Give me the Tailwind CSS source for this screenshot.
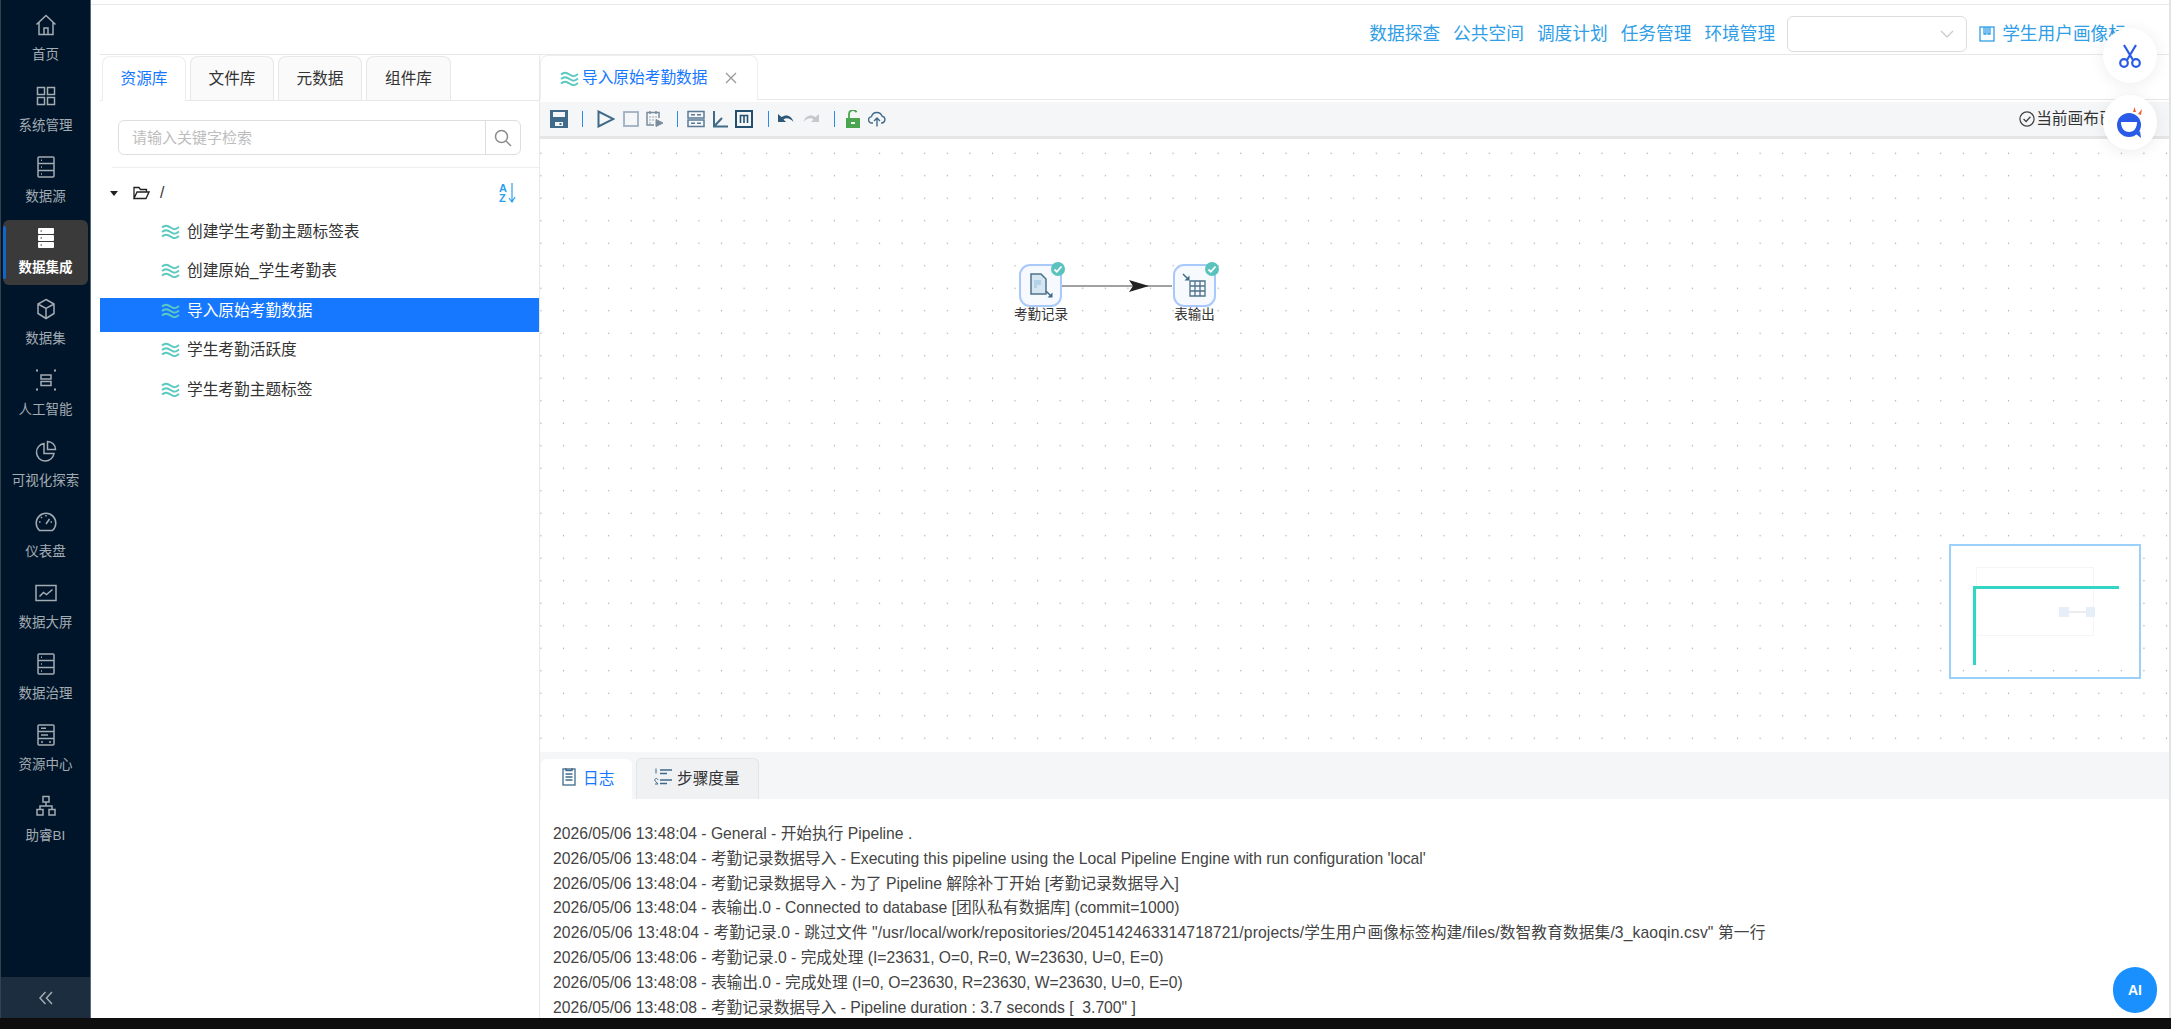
<!DOCTYPE html>
<html lang="zh-CN">

<head>
    <meta charset="UTF-8">
    <title>数据集成</title>
    <script src="https://cdn.jsdelivr.net/npm/@tailwindcss/browser@4"></script>
</head>

<body class="h-screen w-screen overflow-hidden bg-white font-['Liberation_Sans','Noto_Sans_CJK_SC',sans-serif]">
    <svg class="hidden">
        <symbol id="wave" viewBox="0 0 19 15">
            <path d="M1 3.500c3-2.500 5-2.500 8.500 0s5 2 8.500-.5M1 8c3-2.500 5-2.500 8.500 0s5 2 8.500-.5M1 12.500c3-2.500 5-2.500 8.500 0s5 2 8.500-.5" fill="none" stroke="#5cc9c0" stroke-width="2" />
        </symbol>
        <symbol id="rows" viewBox="0 0 22 22" fill="none" stroke="currentColor" stroke-width="1.500">
            <rect x="3" y="1" width="16" height="20" rx="1" />
            <path d="M3 7.500h16M3 14.500h16M6 4.200h1M6 11h1M6 18h1" />
        </symbol>
    </svg>

    <div class="relative flex h-[1018px] border-r-2 border-[#e3e3e3]">
        <!-- sidebar -->
        <aside class="flex h-full w-[91px] shrink-0 flex-col border-x border-x-[#5b6875] border-l-[#33424f] bg-[#001529] text-[#a3abb3]">
            <nav class="flex-1 pt-1">
                <a class="flex h-[71px] flex-col items-center px-[2px] py-[3px]">
                    <svg class="mt-[7px] h-[22px] w-[22px]" viewBox="0 0 22 22" fill="none" stroke="currentColor" stroke-width="1.500">
                        <path d="M1.500 10.500 11 1.500l9.500 9M4 8.500V20.500h14V8.500M9 20.500v-6.500h4v6.500" />
                    </svg>
                    <span class="mt-[9px] text-[13.500px] leading-5">首页</span>
                </a>
                <a class="flex h-[71px] flex-col items-center px-[2px] py-[3px]">
                    <svg class="mt-[7px] h-[22px] w-[22px]" viewBox="0 0 22 22" fill="none" stroke="currentColor" stroke-width="1.500">
                        <rect x="2.500" y="2.500" width="7" height="7" />
                        <rect x="12.500" y="2.500" width="7" height="7" />
                        <rect x="2.500" y="12.500" width="7" height="7" />
                        <rect x="12.500" y="12.500" width="7" height="7" />
                    </svg>
                    <span class="mt-[9px] text-[13.500px] leading-5">系统管理</span>
                </a>
                <a class="flex h-[71px] flex-col items-center px-[2px] py-[3px]">
                    <svg class="mt-[7px] h-[22px] w-[22px]">
                        <use href="#rows" />
                    </svg>
                    <span class="mt-[9px] text-[13.500px] leading-5">数据源</span>
                </a>
                <a class="relative flex h-[71px] flex-col items-center px-[2px] py-[3px] text-white">
                    <span class="flex h-full w-full flex-col items-center rounded-md bg-[#3a3a3a]">
                        <svg class="mt-[7px] h-[22px] w-[22px]" viewBox="0 0 22 22">
                            <rect x="3" y="1" width="16" height="6" rx="1" fill="#fff" />
                            <rect x="3" y="8" width="16" height="6" rx="1" fill="#fff" />
                            <rect x="3" y="15" width="16" height="6" rx="1" fill="#fff" />
                            <path d="M5.500 4h1.500M5.500 11h1.500M5.500 18h1.500" stroke="#333" stroke-width="1.200" />
                        </svg>
                        <span class="mt-[9px] text-[13.500px] font-bold leading-5">数据集成</span>
                    </span>
                    <span class="absolute left-[2px] top-[9px] h-[53px] w-[3px] rounded bg-[#1266c4]"></span>
                </a>
                <a class="flex h-[71px] flex-col items-center px-[2px] py-[3px]">
                    <svg class="mt-[7px] h-[22px] w-[22px]" viewBox="0 0 22 22" fill="none" stroke="currentColor" stroke-width="1.500">
                        <path d="M11 1.500l8 4.500v9.500l-8 5-8-5V6zM3 6l8 4.500L19 6M11 10.500v10" />
                    </svg>
                    <span class="mt-[9px] text-[13.500px] leading-5">数据集</span>
                </a>
                <a class="flex h-[71px] flex-col items-center px-[2px] py-[3px]">
                    <svg class="mt-[7px] h-[22px] w-[22px]" viewBox="0 0 22 22" fill="none" stroke="currentColor" stroke-width="1.500">
                        <rect x="6" y="6" width="10" height="4" />
                        <rect x="6" y="12.500" width="10" height="4" />
                        <path d="M1 1.500h2M19 1.500h2M1 20.500h2M19 20.500h2" stroke-width="2.200" />
                    </svg>
                    <span class="mt-[9px] text-[13.500px] leading-5">人工智能</span>
                </a>
                <a class="flex h-[71px] flex-col items-center px-[2px] py-[3px]">
                    <svg class="mt-[7px] h-[22px] w-[22px]" viewBox="0 0 22 22" fill="none" stroke="currentColor" stroke-width="1.500">
                        <path d="M9 3.500a8.800 8.800 0 1 0 10 10h-10zM12.500 1.500v8h8a8 8 0 0 0-8-8z" />
                    </svg>
                    <span class="mt-[9px] text-[13.500px] leading-5">可视化探索</span>
                </a>
                <a class="flex h-[71px] flex-col items-center px-[2px] py-[3px]">
                    <svg class="mt-[7px] h-[22px] w-[22px]" viewBox="0 0 22 22" fill="none" stroke="currentColor" stroke-width="1.500">
                        <path d="M4.500 19.500a9.800 9.800 0 1 1 13 0zM11 13l3.500-5M4 11h1.500M17 11h-1.500M11 4v1.500M6 6l1 1" />
                    </svg>
                    <span class="mt-[9px] text-[13.500px] leading-5">仪表盘</span>
                </a>
                <a class="flex h-[71px] flex-col items-center px-[2px] py-[3px]">
                    <svg class="mt-[7px] h-[22px] w-[22px]" viewBox="0 0 22 22" fill="none" stroke="currentColor" stroke-width="1.500">
                        <rect x="1" y="3.500" width="20" height="15" />
                        <path d="M4.500 14.500l4-4 3 2 6-5" />
                    </svg>
                    <span class="mt-[9px] text-[13.500px] leading-5">数据大屏</span>
                </a>
                <a class="flex h-[71px] flex-col items-center px-[2px] py-[3px]">
                    <svg class="mt-[7px] h-[22px] w-[22px]">
                        <use href="#rows" />
                    </svg>
                    <span class="mt-[9px] text-[13.500px] leading-5">数据治理</span>
                </a>
                <a class="flex h-[71px] flex-col items-center px-[2px] py-[3px]">
                    <svg class="mt-[7px] h-[22px] w-[22px]" viewBox="0 0 22 22" fill="none" stroke="currentColor" stroke-width="1.500">
                        <rect x="3" y="1" width="16" height="20" rx="1" />
                        <path d="M3 7.500h16M3 14.500h16M6 4.200h5M6 11h7M6 18h2M14 18h2" />
                    </svg>
                    <span class="mt-[9px] text-[13.500px] leading-5">资源中心</span>
                </a>
                <a class="flex h-[71px] flex-col items-center px-[2px] py-[3px]">
                    <svg class="mt-[7px] h-[22px] w-[22px]" viewBox="0 0 22 22" fill="none" stroke="currentColor" stroke-width="1.500">
                        <rect x="8" y="1.500" width="6" height="5.500" />
                        <rect x="2" y="14.500" width="6" height="5.500" />
                        <rect x="14" y="14.500" width="6" height="5.500" />
                        <path d="M11 7v4M5 14.500V11h12v3.500" />
                    </svg>
                    <span class="mt-[9px] text-[13.500px] leading-5">助睿BI</span>
                </a>
            </nav>
            <button class="flex h-[41px] w-full items-center justify-center bg-[#1b2d3e]">
                <svg class="h-4 w-4" viewBox="0 0 16 16" fill="none" stroke="#a3abb3" stroke-width="1.500">
                    <path d="M7.500 2 2 8l5.500 6M14 2 8.500 8l5.500 6" />
                </svg>
            </button>
        </aside>

        <!-- content -->
        <div class="flex min-w-0 flex-1 flex-col">
            <div class="h-[5px] shrink-0 border-b border-[#e8e8e8]"></div>
            <div class="ml-[9px] flex h-[50px] shrink-0 items-center justify-end border-b border-[#e8e8e8] pr-[43px] pt-[9px]">
                <div class="flex items-center gap-[13px] text-[17.700px] leading-6 text-[#2f9ee6]">
                    <a>数据探查</a>
                    <a>公共空间</a>
                    <a>调度计划</a>
                    <a>任务管理</a>
                    <a>环境管理</a>
                </div>
                <div class="ml-[12px] flex h-[36px] w-[180px] items-center justify-end rounded-md border border-[#dcdcdc] pr-[12px]">
                    <svg class="h-3 w-3.5" viewBox="0 0 14 12" fill="none" stroke="#c8c8c8" stroke-width="1.200">
                        <path d="M1 3l6 6 6-6" />
                    </svg>
                </div>
                <a class="ml-[12px] flex items-center whitespace-nowrap text-[17.700px] leading-6 text-[#2f9ee6]">
                    <svg class="mr-[7px] h-4 w-4 shrink-0" viewBox="0 0 16 16" fill="none" stroke="currentColor" stroke-width="1.300">
                        <rect x="1" y="1" width="14" height="14" />
                        <path d="M5 1v7h2V1M9 1v7h2V1" />
                    </svg>
                    学生用户画像标
                </a>
            </div>

            <div class="flex min-h-0 flex-1">
                <!-- repository panel -->
                <section class="ml-[9px] w-[440px] shrink-0 border-r border-[#e8e8e8]">
                    <div class="flex h-[46px] items-end gap-1 border-b border-[#e8e8e8] pl-[2px] text-[15.700px] text-[#333]">
                        <button class="-mb-px flex h-[45px] w-[84px] items-center justify-center rounded-t-lg border border-b-0 border-[#eee] bg-white text-[#1677ff]">资源库</button>
                        <button class="flex h-[44px] w-[84px] items-center justify-center rounded-t-lg border border-b-0 border-[#e8e8e8] bg-[#fafafa]">文件库</button>
                        <button class="flex h-[44px] w-[84px] items-center justify-center rounded-t-lg border border-b-0 border-[#e8e8e8] bg-[#fafafa]">元数据</button>
                        <button class="flex h-[44px] w-[85px] items-center justify-center rounded-t-lg border border-b-0 border-[#e8e8e8] bg-[#fafafa]">组件库</button>
                    </div>
                    <div class="ml-[18px] mt-[19px] flex h-[35px] w-[403px] items-center rounded-md border border-[#dedede]">
                        <input class="h-full min-w-0 flex-1 bg-transparent pl-[13px] text-[15px] outline-none placeholder:text-[#bdbdbd]" placeholder="请输入关键字检索">
                        <span class="flex h-full w-[35px] shrink-0 items-center justify-center border-l border-[#dedede]">
                            <svg class="h-[18px] w-[18px]" viewBox="0 0 18 18" fill="none" stroke="#8a8a8a" stroke-width="1.500">
                                <circle cx="7.500" cy="7.500" r="6" />
                                <path d="M12 12l5 5" />
                            </svg>
                        </span>
                    </div>
                    <div class="ml-[12px] mt-[12px] h-px bg-[#eeeeee]"></div>

                    <div class="flex h-[48px] items-center pl-[10px] pt-[2px] text-[#333]">
                        <span class="h-0 w-0 border-x-[4px] border-t-[5px] border-x-transparent border-t-[#222]"></span>
                        <svg class="ml-[15px] h-[14px] w-[17px]" viewBox="0 0 17 14" fill="none" stroke="#222" stroke-width="1.300">
                            <path d="M1 12.500V1.500h5l1.500 2h6v2.500M1 12.500h12l3-6.500H4z" />
                        </svg>
                        <span class="ml-[10px] text-[15.700px]">/</span>
                        <span class="relative ml-auto mr-[22px] flex w-[18px] flex-col text-[11px] font-bold leading-[10px] text-[#2b9fee]">
                            <span>A</span><span>Z</span>
                            <svg class="absolute left-[9px] top-0 h-[20px] w-[8px]" viewBox="0 0 8 20" fill="none" stroke="currentColor" stroke-width="1.200">
                                <path d="M4 0v18M1 15l3 4 3-5" />
                            </svg>
                        </span>
                    </div>

                    <ul class="mt-[3px] flex flex-col gap-[5.400px] text-[15.700px] leading-[26px] text-[#333]">
                        <li class="flex h-[34px] pl-[61px]"><svg class="mr-[7px] mt-[5px] h-[15px] w-[19px]"><use href="#wave" /></svg>创建学生考勤主题标签表</li>
                        <li class="flex h-[34px] pl-[61px]"><svg class="mr-[7px] mt-[5px] h-[15px] w-[19px]"><use href="#wave" /></svg>创建原始_学生考勤表</li>
                        <li class="flex h-[34px] bg-[#1677ff] pl-[61px] text-white"><svg class="mr-[7px] mt-[5px] h-[15px] w-[19px]"><use href="#wave" /></svg>导入原始考勤数据</li>
                        <li class="flex h-[34px] pl-[61px]"><svg class="mr-[7px] mt-[5px] h-[15px] w-[19px]"><use href="#wave" /></svg>学生考勤活跃度</li>
                        <li class="flex h-[34px] pl-[61px]"><svg class="mr-[7px] mt-[5px] h-[15px] w-[19px]"><use href="#wave" /></svg>学生考勤主题标签</li>
                    </ul>
                </section>

                <!-- editor -->
                <section class="flex min-w-0 flex-1 flex-col">
                    <div class="flex h-[45px] shrink-0 border-b border-[#e8e8e8]">
                        <div class="-mb-px flex h-[45px] w-[218px] items-center rounded-t-lg border border-b-0 border-[#eee] bg-white pl-[19px] text-[15.700px] text-[#1677ff]">
                            <svg class="mr-[3px] h-[15px] w-[19px]"><use href="#wave" /></svg>
                            导入原始考勤数据
                            <svg class="ml-[17px] h-[12px] w-[12px]" viewBox="0 0 12 12" stroke="#999" stroke-width="1.300">
                                <path d="M1 1l10 10M11 1 1 11" />
                            </svg>
                        </div>
                    </div>

                    <div class="mt-[2px] flex h-[37px] shrink-0 items-center border-b-[3px] border-[#e6e6e6] bg-[#f5f6f8] pl-[10px] pr-[23px]">
                        <svg class="h-[18px] w-[18px]" viewBox="0 0 18 18">
                            <path d="M0 0h18v18H0zM3 2v5h12V2zM5 12v4h8v-4z" fill="#3f6a8a" fill-rule="evenodd" />
                            <path d="M9.500 13h2v2h-2z" fill="#3f6a8a" />
                        </svg>
                        <span class="mx-[14px] h-[16px] w-px bg-[#2a8ce8]"></span>
                        <svg class="h-[18px] w-[18px]" viewBox="0 0 18 18" fill="none" stroke="#3f6a8a" stroke-width="2">
                            <path d="M1.500 1.500v15l15-7.500z" />
                        </svg>
                        <svg class="ml-[8px] h-4 w-4" viewBox="0 0 16 16" fill="none" stroke="#9fb0bf" stroke-width="1.800">
                            <rect x="1" y="1" width="14" height="14" />
                        </svg>
                        <svg class="ml-[7px] h-[18px] w-[18px]" viewBox="0 0 18 18" fill="none" stroke="#7a8c9c" stroke-width="1.500">
                            <path d="M8 15H1V2.500h12V8M4 1v3M10 1v3" />
                            <path d="M3.500 7h1M6.500 7h1M9.500 7h1M3.500 10h1M6.500 10h1M3.500 13h1" stroke-width="1.300" />
                            <path d="M10 9.500v7l7-3.500z" fill="#7a8c9c" stroke-width="1" />
                        </svg>
                        <span class="ml-[13px] mr-[9px] h-[16px] w-px bg-[#2a8ce8]"></span>
                        <svg class="h-[18px] w-[18px]" viewBox="0 0 18 18" fill="none" stroke="#5a7a95" stroke-width="1.500">
                            <rect x="1" y="1.500" width="16" height="6.500" />
                            <rect x="1" y="10" width="16" height="6.500" />
                            <path d="M4 4.700h4M10 4.700h4M4 13.300h4M10 13.300h4" />
                        </svg>
                        <svg class="ml-[7px] h-[18px] w-[17px]" viewBox="0 0 17 18" fill="none" stroke="#3f6a8a" stroke-width="2">
                            <path d="M2 1v15.500h14M2 16.500 10 8" />
                        </svg>
                        <svg class="ml-[6px] h-[18px] w-[18px]" viewBox="0 0 18 18" fill="none" stroke="#24506f" stroke-width="2">
                            <rect x="1" y="1" width="16" height="16" />
                            <path d="M5.500 13V5.500h7V13M9 5.500V13" stroke-width="1.600" />
                        </svg>
                        <span class="mx-[15px] h-[16px] w-px bg-[#2a8ce8]"></span>
                        <svg class="-ml-[6px] h-[16px] w-[16px]" viewBox="0 0 16 16">
                            <path d="M0 3v8h8L5.500 8.500C8 6.500 12 7 15.500 11c-1.500-6-7-8.500-12-5z" fill="#2f5876" />
                        </svg>
                        <svg class="ml-[9px] h-[16px] w-[16px] -scale-x-100" viewBox="0 0 16 16">
                            <path d="M0 3v8h8L5.500 8.500C8 6.500 12 7 15.500 11c-1.500-6-7-8.500-12-5z" fill="#c4c9cd" />
                        </svg>
                        <span class="mx-[15px] h-[16px] w-px bg-[#2a8ce8]"></span>
                        <svg class="-ml-[4px] h-[18px] w-[14px]" viewBox="0 0 14 18">
                            <path d="M3 8V4a4 4 0 0 1 7.500-1.800" fill="none" stroke="#4aa64e" stroke-width="1.800" />
                            <path d="M0 8h14v10H0zM5 12v2h4v-2z" fill="#4aa64e" fill-rule="evenodd" />
                        </svg>
                        <svg class="ml-[8px] h-[16px] w-[18px]" viewBox="0 0 18 16" fill="none" stroke="#3f6a8a" stroke-width="1.400">
                            <path d="M5 12H4a3.200 3.200 0 0 1-.5-6.400 5.500 5.500 0 0 1 10.500-.5 3.500 3.500 0 0 1 0 6.900h-1M9 15.500V7.500M6 10l3-3 3 3" />
                        </svg>
                        <span class="ml-auto flex items-center gap-px text-[15.700px] text-[#333]">
                            <svg class="h-4 w-4" viewBox="0 0 14 14" fill="none" stroke="#444" stroke-width="1.100">
                                <circle cx="7" cy="7" r="6.200" />
                                <path d="M4 7l2.200 2.200L10 5" />
                            </svg>
                            当前画布已保存
                        </span>
                    </div>

                    <!-- canvas -->
                    <div class="relative min-h-0 flex-1 overflow-hidden bg-white bg-[radial-gradient(circle,#a0a0a0_0.8px,transparent_1px)] bg-[length:22.590px_22.500px] bg-[position:-10.400px_3px]">
                        <svg class="absolute left-[521px] top-[141px] h-[12px] w-[114px]" viewBox="0 0 114 12">
                            <path d="M0 6h111" stroke="#444" stroke-width="1.200" />
                            <path d="M68 0l20 6-20 6 4-6z" fill="#222" />
                        </svg>
                        <div class="absolute left-[479px] top-[125px] flex h-[43px] w-[43px] items-center justify-center rounded-[11px] border-2 border-[#a9c9fb] bg-[#f6faff]">
                            <svg class="h-[26px] w-[26px]" viewBox="0 0 26 26">
                                <path d="M3 1h10l5 5v15H3z" fill="#d5e6f2" stroke="#4f7089" stroke-width="1.500" />
                                <path d="M6 7h7v5H9v3H6z" fill="#b3d2e8" />
                                <path d="M18 18l5 5" stroke="#3f6a8a" stroke-width="1.500" />
                                <path d="M24.500 24.500h-5l5-5z" fill="#3f6a8a" />
                            </svg>
                        </div>
                        <span class="absolute left-[511px] top-[123px] flex h-[14px] w-[14px] items-center justify-center rounded-full bg-[#5bc3bd]">
                            <svg class="h-[10px] w-[10px]" viewBox="0 0 10 10" fill="none" stroke="#fff" stroke-width="1.800"><path d="M1.500 5.500l2.300 2.300L8.500 2.500" /></svg>
                        </span>
                        <span class="absolute left-[473px] top-[167px] w-[56px] whitespace-nowrap text-center text-[13.500px] leading-[18px] text-[#333]">考勤记录</span>

                        <div class="absolute left-[633px] top-[125px] flex h-[43px] w-[43px] items-center justify-center rounded-[11px] border-2 border-[#a9c9fb] bg-[#f6faff]">
                            <svg class="h-[26px] w-[26px]" viewBox="0 0 26 26" fill="none" stroke="#4f7089" stroke-width="1.300">
                                <path d="M8 8h15v15H8zM8 13h15M8 18h15M13 8v15M18 8v15" />
                                <path d="M1 1l5 5" stroke="#3f6a8a" stroke-width="1.500" />
                                <path d="M7.500 7.500h-5l5-5z" fill="#3f6a8a" stroke="none" />
                            </svg>
                        </div>
                        <span class="absolute left-[665px] top-[123px] flex h-[14px] w-[14px] items-center justify-center rounded-full bg-[#5bc3bd]">
                            <svg class="h-[10px] w-[10px]" viewBox="0 0 10 10" fill="none" stroke="#fff" stroke-width="1.800"><path d="M1.500 5.500l2.300 2.300L8.500 2.500" /></svg>
                        </span>
                        <span class="absolute left-[633px] top-[167px] w-[43px] whitespace-nowrap text-center text-[13.500px] leading-[18px] text-[#333]">表输出</span>

                        <!-- minimap -->
                        <div class="absolute left-[1409px] top-[405px] h-[135px] w-[192px] border-2 border-[#9bd0fb]">
                            <div class="absolute left-0 top-0 h-[122px] w-[171px] bg-white"></div>
                            <div class="absolute left-[25px] top-[21px] h-[69px] w-[118px] border border-[#f5f5f5]"></div>
                            <div class="absolute left-[22px] top-[40px] h-[79px] w-[146px] border-l-[3px] border-t-[3px] border-[#33d6c4]"></div>
                            <div class="absolute left-[108px] top-[61px] h-[10px] w-[10px] bg-[#e6eef8]"></div>
                            <div class="absolute left-[118px] top-[65px] h-[2px] w-[17px] bg-[#ececec]"></div>
                            <div class="absolute left-[135px] top-[61px] h-[10px] w-[9px] bg-[#e6eef8]"></div>
                        </div>
                    </div>

                    <!-- log panel -->
                    <div class="flex h-[47px] shrink-0 items-end gap-[4px] bg-[#f5f6f8] pl-px text-[15.700px]">
                        <button class="flex h-[40px] w-[91px] items-center rounded-t-md bg-white pl-[21px] text-[#1677ff]">
                            <svg class="mr-[7px] -mt-[6px] h-[19px] w-[14px]" viewBox="0 0 14 19" fill="none" stroke="#3f6a8a" stroke-width="1.300">
                                <rect x="1" y="2" width="12" height="16" />
                                <path d="M4 1v2.500h6V1M3.500 7h7M3.500 10h7M3.500 13h7" />
                            </svg>
                            日志
                        </button>
                        <button class="flex h-[41px] w-[123px] items-center rounded-t-md border border-b-0 border-[#e3e4e6] bg-[#f0f1f3] pl-[17px] text-[#333]">
                            <svg class="mr-[5px] -mt-[6px] h-[19px] w-[18px]" viewBox="0 0 18 19" fill="none" stroke="#3f6a8a" stroke-width="1.400">
                                <path d="M6 3h12M6 6.500h7M6 13h12M6 16.500h7" />
                                <path d="M2 1.500v5M1 17h3L1.200 14a1.500 1.500 0 1 1 2.600-1" stroke-width="1" />
                            </svg>
                            步骤度量
                        </button>
                    </div>
                    <div class="relative h-[219px] shrink-0 overflow-hidden bg-white pl-[13px] pt-[23px] text-[15.700px] leading-[24.800px] text-[#444]">
                        <p>2026/05/06 13:48:04 - General - 开始执行 Pipeline .</p>
                        <p>2026/05/06 13:48:04 - 考勤记录数据导入 - Executing this pipeline using the Local Pipeline Engine with run configuration 'local'</p>
                        <p>2026/05/06 13:48:04 - 考勤记录数据导入 - 为了 Pipeline 解除补丁开始 [考勤记录数据导入]</p>
                        <p>2026/05/06 13:48:04 - 表输出.0 - Connected to database [团队私有数据库] (commit=1000)</p>
                        <p class="tracking-[0.120px]">2026/05/06 13:48:04 - 考勤记录.0 - 跳过文件 "/usr/local/work/repositories/2045142463314718721/projects/学生用户画像标签构建/files/数智教育数据集/3_kaoqin.csv" 第一行</p>
                        <p>2026/05/06 13:48:06 - 考勤记录.0 - 完成处理 (I=23631, O=0, R=0, W=23630, U=0, E=0)</p>
                        <p>2026/05/06 13:48:08 - 表输出.0 - 完成处理 (I=0, O=23630, R=23630, W=23630, U=0, E=0)</p>
                        <p>2026/05/06 13:48:08 - 考勤记录数据导入 - Pipeline duration : 3.7 seconds [ &nbsp;3.700" ]</p>
                    </div>
                </section>
            </div>
        </div>

        <!-- floating buttons -->
        <button class="absolute left-[2103px] top-[28px] flex h-[55px] w-[54px] items-center justify-center rounded-full bg-white shadow-[0_2px_16px_rgba(0,0,0,0.08)]">
            <svg class="h-[24px] w-[24px]" viewBox="0 0 24 24" fill="none" stroke="#2a5be8" stroke-width="2.200">
                <path d="M6 1l9 15M18 1 9 16" />
                <circle cx="6" cy="19" r="3.800" />
                <circle cx="18" cy="19" r="3.800" />
            </svg>
        </button>
        <button class="absolute left-[2103px] top-[95px] flex h-[55px] w-[54px] items-center justify-center rounded-full bg-white shadow-[0_2px_16px_rgba(0,0,0,0.08)]">
            <svg class="h-[38px] w-[32px]" viewBox="0 0 32 38">
                <path d="M19 8l1.500-5 1.500 5zM24 10l4-5-1 6z" fill="#f2622e" />
                <circle cx="15" cy="21" r="12" fill="#2a5be8" />
                <path d="M22 30l5 4-1-7z" fill="#2a5be8" />
                <path d="M7 18h16c0 6-3 10-8 10s-8-4-8-10z" fill="#fff" />
            </svg>
        </button>
        <button class="absolute left-[2113px] top-[967px] flex h-[46px] w-[44px] items-center justify-center rounded-full bg-[#1a90ff] text-[14px] font-bold text-white">AI</button>
    </div>
    <div class="h-[11px] bg-[#0e0e0e]"></div>
</body>

</html>
